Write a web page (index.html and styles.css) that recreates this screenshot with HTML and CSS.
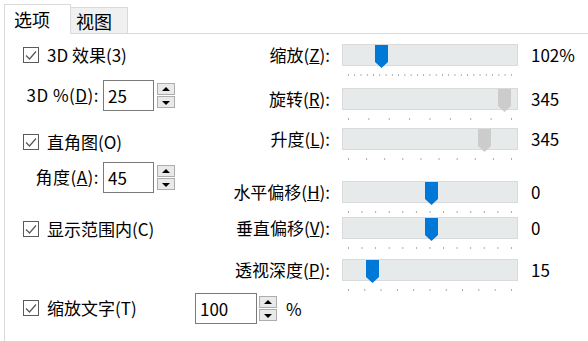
FILE: index.html
```html
<!DOCTYPE html>
<html lang="zh-CN">

<head>
    <meta charset="UTF-8">
    <title>选项</title>
    <link rel="stylesheet" href="styles.css">
</head>

<body>
    <div class="dialog">
        <div class="tabs">
            <div class="tab active">选项</div>
            <div class="tab">视图</div>
        </div>

        <div class="panel">
            <div class="columns">
                <div class="left">
                    <label class="check">
                        <span class="box"><svg width="16" height="16" viewBox="0 0 16 16"><polyline points="3,8.5 6.5,12 13,4.5" /></svg></span>
                        3D 效果(3)
                    </label>
                    <div class="field">
                        <span class="field-label">3D %(<u>D</u>):</span>
                        <input class="num" type="text" value="25">
                        <div class="spinner"><button class="up"></button><button class="down"></button></div>
                    </div>
                    <label class="check">
                        <span class="box"><svg width="16" height="16" viewBox="0 0 16 16"><polyline points="3,8.5 6.5,12 13,4.5" /></svg></span>
                        直角图(O)
                    </label>
                    <div class="field">
                        <span class="field-label">角度(<u>A</u>):</span>
                        <input class="num" type="text" value="45">
                        <div class="spinner"><button class="up"></button><button class="down"></button></div>
                    </div>
                    <label class="check">
                        <span class="box"><svg width="16" height="16" viewBox="0 0 16 16"><polyline points="3,8.5 6.5,12 13,4.5" /></svg></span>
                        显示范围内(C)
                    </label>
                </div>

                <div class="sliders">
                    <span class="s-label">缩放(<u>Z</u>):</span>
                    <div class="slider">
                        <div class="track"><span class="thumb" style="left: 32px;"></span></div>
                        <div class="ticks t26"></div>
                    </div>
                    <span class="s-value">102%</span>

                    <span class="s-label">旋转(<u>R</u>):</span>
                    <div class="slider">
                        <div class="track"><span class="thumb off" style="left: 155px;"></span></div>
                        <div class="ticks t8"></div>
                    </div>
                    <span class="s-value">345</span>

                    <span class="s-label">升度(<u>L</u>):</span>
                    <div class="slider">
                        <div class="track"><span class="thumb off" style="left: 135px;"></span></div>
                        <div class="ticks t9"></div>
                    </div>
                    <span class="s-value">345</span>

                    <span class="s-label">水平偏移(<u>H</u>):</span>
                    <div class="slider">
                        <div class="track"><span class="thumb" style="left: 82px;"></span></div>
                        <div class="ticks t12"></div>
                    </div>
                    <span class="s-value">0</span>

                    <span class="s-label">垂直偏移(<u>V</u>):</span>
                    <div class="slider">
                        <div class="track"><span class="thumb" style="left: 82px;"></span></div>
                        <div class="ticks t12"></div>
                    </div>
                    <span class="s-value">0</span>

                    <span class="s-label">透视深度(<u>P</u>):</span>
                    <div class="slider">
                        <div class="track"><span class="thumb" style="left: 23px;"></span></div>
                        <div class="ticks t10"></div>
                    </div>
                    <span class="s-value">15</span>
                </div>
            </div>

            <div class="bottom">
                <label class="check wide">
                    <span class="box"><svg width="16" height="16" viewBox="0 0 16 16"><polyline points="3,8.5 6.5,12 13,4.5" /></svg></span>
                    缩放文字(T)
                </label>
                <input class="num big" type="text" value="100">
                <div class="spinner"><button class="up"></button><button class="down"></button></div>
                <span class="unit">%</span>
            </div>
        </div>
    </div>
</body>

</html>
```

FILE: styles.css
```css
body {
    margin: 0;
    background-color: #ffffff;
    color: #000000;
    font-family: "Noto Sans CJK SC", "Noto Sans", sans-serif;
    font-size: 17px;
}

.dialog {
    display: flex;
    flex-direction: column;
    height: 341px;
    padding: 4px 0 0 4px;
    box-sizing: border-box;
}

/* tabs */
.tabs {
    display: flex;
    align-items: flex-end;
    height: 29px;
}

.tab {
    box-sizing: border-box;
    height: 26px;
    width: 57px;
    padding: 1px 0 0 5px;
    border: 1px solid #d9d9d9;
    border-left: none;
    border-bottom: none;
    background-color: #f0f0f0;
    font-size: 18px;
    line-height: 24px;
}

.tab.active {
    position: relative;
    height: 30px;
    width: 67px;
    margin-bottom: -1px;
    padding: 0 0 0 9px;
    border-left: 1px solid #d9d9d9;
    background-color: #ffffff;
    line-height: 28px;
}

.panel {
    flex: 1;
    border-top: 1px solid #d9d9d9;
    border-left: 1px solid #d9d9d9;
}

.columns {
    display: flex;
}

/* left column */
.left {
    display: grid;
    grid-template-rows: 36px 51px 31px 56px 22px;
    align-items: start;
    width: 177px;
    padding: 10px 0 0 18px;
}

.check {
    display: flex;
    align-items: center;
    gap: 8px;
    height: 22px;
    line-height: 22px;
    white-space: nowrap;
}

.check.wide {
    width: 172px;
}

.box {
    display: block;
    width: 16px;
    height: 16px;
    box-sizing: border-box;
    border: 1px solid #5a5a5a;
    background-color: #ffffff;
}

.box svg {
    display: block;
    margin: -1px;
}

.box polyline {
    fill: none;
    stroke: #5a5a5a;
    stroke-width: 1.3;
}

.field {
    display: flex;
    align-items: center;
    height: 30px;
    line-height: 22px;
}

.field-label {
    width: 76px;
    margin-right: 4px;
    text-align: right;
    white-space: nowrap;
    letter-spacing: 0.5px;
}

.num {
    box-sizing: border-box;
    width: 51px;
    height: 31px;
    padding: 0 4px;
    border: 1px solid #7a7a7a;
    font-family: inherit;
    font-size: 17px;
    color: #000000;
    outline: none;
}

.num.big {
    width: 62px;
}

.spinner {
    display: flex;
    flex-direction: column;
    gap: 1px;
    margin-left: 3px;
}

.spinner button {
    position: relative;
    box-sizing: border-box;
    width: 18px;
    height: 12px;
    padding: 0;
    border: 1px solid #adadad;
    background-color: #e9e9e9;
}

.spinner button::after {
    content: "";
    position: absolute;
    left: 4px;
    border-left: 4px solid transparent;
    border-right: 4px solid transparent;
}

.spinner .up::after {
    top: 3px;
    border-bottom: 4px solid #000000;
}

.spinner .down::after {
    top: 4px;
    border-top: 4px solid #000000;
}

/* sliders */
.sliders {
    display: grid;
    grid-template-columns: 130px 176px auto;
    grid-template-rows: 44px 40px 53px 36px 42px 31px;
    column-gap: 12px;
    align-items: start;
    padding-top: 10px;
}

.s-label {
    line-height: 22px;
    text-align: right;
    white-space: nowrap;
}

.s-value {
    line-height: 22px;
    padding-left: 1px;
}

.track {
    position: relative;
    box-sizing: border-box;
    height: 22px;
    border: 1px solid #dadada;
    background-color: #e7eaea;
}

.thumb {
    position: absolute;
    top: 0;
    width: 13px;
    height: 23px;
    background-color: #0078d7;
    clip-path: polygon(0 0, 100% 0, 100% 74%, 50% 100%, 0 74%);
}

.thumb.off {
    background-color: #cccccc;
}

.ticks {
    height: 2px;
    margin: 8px 6px 0 6px;
    background-image: linear-gradient(to right, #a9a9a9 1px, transparent 1px);
    background-repeat: repeat-x;
}

.t26 { background-size: calc((100% - 1px) / 26) 2px; }
.t12 { background-size: calc((100% - 1px) / 12) 2px; }
.t10 { background-size: calc((100% - 1px) / 10) 2px; }
.t9 { background-size: calc((100% - 1px) / 9) 2px; }
.t8 { background-size: calc((100% - 1px) / 8) 2px; }

/* bottom row */
.bottom {
    display: flex;
    align-items: center;
    height: 30px;
    margin-top: 3px;
    padding-left: 18px;
}

.bottom .spinner {
    margin-left: 2px;
}

.unit {
    margin-left: 9px;
}
```
